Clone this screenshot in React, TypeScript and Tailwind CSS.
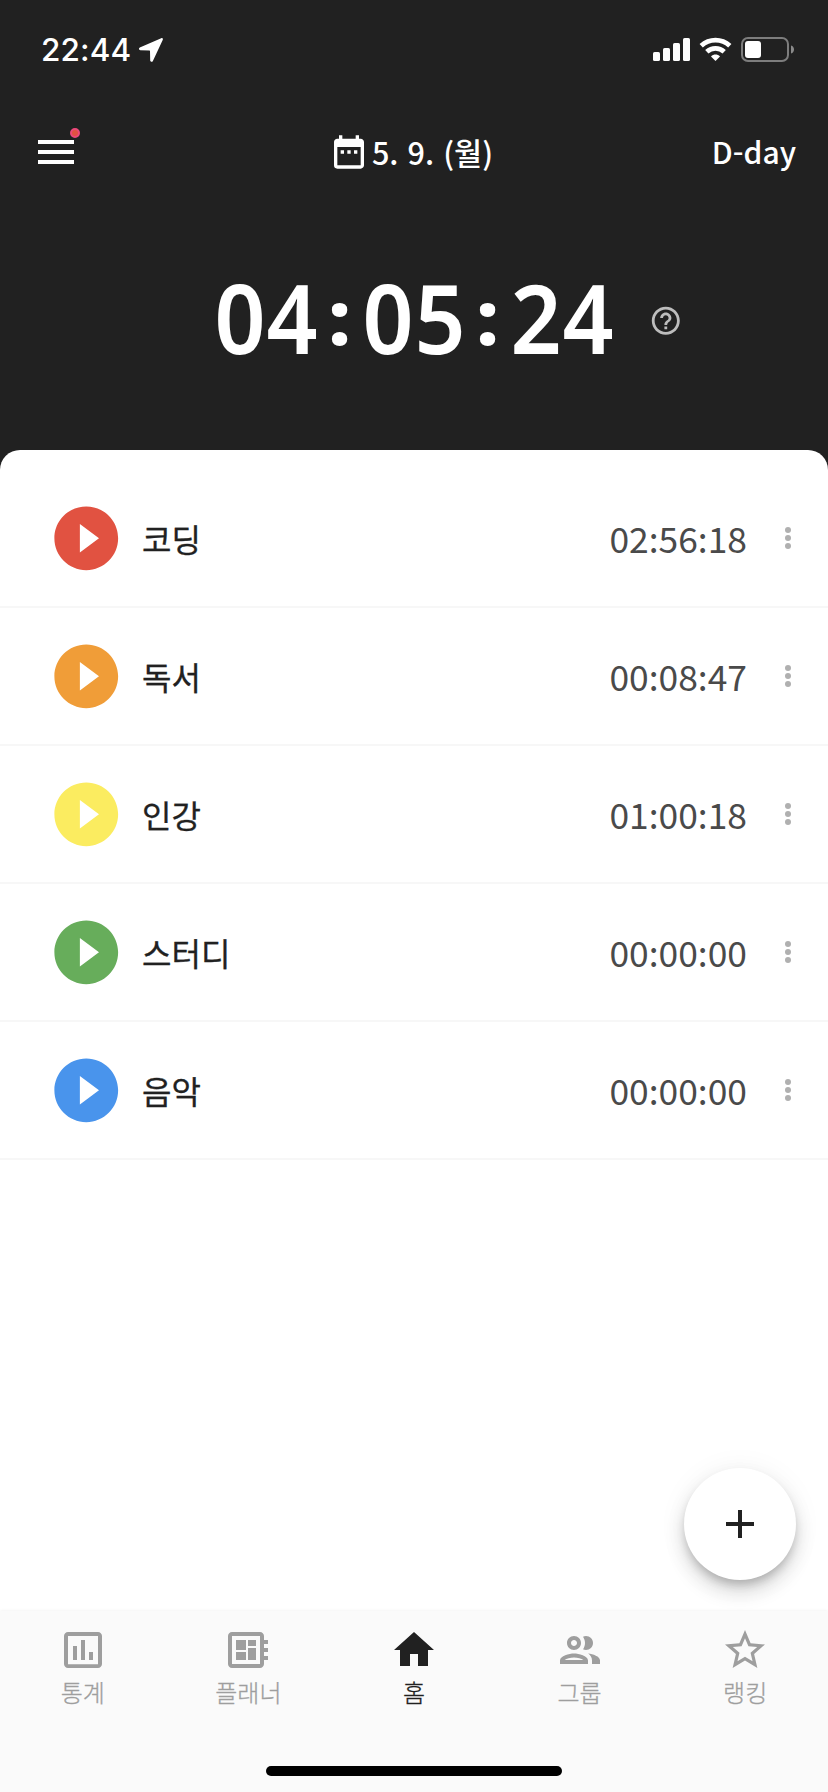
import React from 'react';
import {
  MdAdd,
  MdDateRange,
  MdHelpOutline,
  MdHome,
  MdMenu,
  MdOutlineDeveloperBoard,
  MdOutlineGroup,
  MdPlayCircleFilled,
  MdStarBorder,
} from 'react-icons/md';

interface Subject {
  id: number;
  name: string;
  time: string;
  color: string;
}

interface Tab {
  label: string;
  icon: React.ComponentType<{ className?: string }>;
  active?: boolean;
}

const ChartIcon: React.FC<{ className?: string }> = ({ className }) => (
  <svg className={className} viewBox="0 0 24 24" fill="currentColor">
    <path d="M9 17H7v-7h2v7zm4 0h-2V7h2v10zm4 0h-2v-4h2v4zm2.5 2.1h-15V5h15v14.1zm0-16.1h-15c-1.1 0-2 .9-2 2v14c0 1.1.9 2 2 2h15c1.1 0 2-.9 2-2V5c0-1.1-.9-2-2-2z" />
  </svg>
);

const subjects: Subject[] = [
  { id: 1, name: '코딩', time: '02:56:18', color: 'text-[#e15241]' },
  { id: 2, name: '독서', time: '00:08:47', color: 'text-[#f09d38]' },
  { id: 3, name: '인강', time: '01:00:18', color: 'text-[#fbec60]' },
  { id: 4, name: '스터디', time: '00:00:00', color: 'text-[#67ad5b]' },
  { id: 5, name: '음악', time: '00:00:00', color: 'text-[#4994ec]' },
];

const tabs: Tab[] = [
  { label: '통계', icon: ChartIcon },
  { label: '플래너', icon: MdOutlineDeveloperBoard },
  { label: '홈', icon: MdHome, active: true },
  { label: '그룹', icon: MdOutlineGroup },
  { label: '랭킹', icon: MdStarBorder },
];

const StatusBar: React.FC = () => (
  <div className="flex h-[100px] items-center justify-between pl-[41px] pr-[33px]">
    <div className="flex items-center">
      <span className="w-[97px] font-['Inter',sans-serif] text-[31.5px] font-[550] leading-none tracking-[0.1px]">22:44</span>
      <svg width="26" height="26" viewBox="0 0 26 26" fill="currentColor">
        <path d="M23.2 1.2 1.8 10.6C.4 11.3.8 13.2 2.3 13.2L11.4 13.4C11.8 13.4 12 13.6 12 14L12.2 23.3C12.2 25 14.2 25.3 14.9 23.9L24.7 3C25.4 1.6 24.4.6 23.2 1.2Z" />
      </svg>
    </div>
    <svg width="142" height="26" viewBox="0 0 142 26" fill="currentColor">
      <rect x="0" y="15" width="7" height="9" rx="1.6" />
      <rect x="10" y="11" width="7" height="13" rx="1.6" />
      <rect x="20" y="6" width="7" height="18" rx="1.6" />
      <rect x="30" y="1" width="7" height="23" rx="1.6" />
      <path d="M62.5 24 58 19.4C60.5 17 64.5 17 67 19.4Z" />
      <path d="M53.8 14.8C58.8 10.2 66.2 10.2 71.2 14.8" fill="none" stroke="currentColor" strokeWidth="4.8" />
      <path d="M48.2 8.8C56.4 1.2 68.6 1.2 76.8 8.8" fill="none" stroke="currentColor" strokeWidth="4.8" />
      <rect x="89" y="1" width="46" height="23" rx="6" fill="none" stroke="#7d7d7d" strokeWidth="2" />
      <rect x="92" y="4" width="16" height="17" rx="3" />
      <path d="M138 8.5C142 9.5 142 15.5 138 16.5Z" fill="#8a8a8a" />
    </svg>
  </div>
);

const Clock: React.FC<{ value: string }> = ({ value }) => (
  <div className="mb-1.5 flex items-baseline font-['Noto_Sans',sans-serif] text-[95px] font-semibold leading-none">
    {value.split('').map((char, i) =>
      char === ':' ? (
        <span key={i} className="flex w-11 -translate-y-[9px] justify-center text-[75px] font-black leading-none">
          {char}
        </span>
      ) : (
        <span key={i} className="flex w-[52px] scale-x-[0.94] justify-center">
          {char}
        </span>
      )
    )}
  </div>
);

const SubjectRow: React.FC<{ subject: Subject }> = ({ subject }) => (
  <li className="flex h-[138px] items-center border-b-2 border-[#f7f7f7] pl-[47.6px] pr-[37px]">
    <MdPlayCircleFilled className={`size-[76.5px] shrink-0 ${subject.color}`} />
    <span className="ml-[18px] text-[32px] leading-none text-[#212121] [-webkit-text-stroke:0.3px]">{subject.name}</span>
    <span className="ml-auto text-[35.4px] leading-none text-[#4a4a4a]">{subject.time}</span>
    <div className="ml-[38px] flex flex-col gap-0.5">
      <span className="size-1.5 rounded-full bg-[#b0b0b0]" />
      <span className="size-1.5 rounded-full bg-[#b0b0b0]" />
      <span className="size-1.5 rounded-full bg-[#b0b0b0]" />
    </div>
  </li>
);

const App: React.FC = () => {
  return (
    <div className="flex h-[1792px] w-[828px] flex-col overflow-hidden bg-[#212121] font-['Noto_Sans_CJK_KR',sans-serif]">
      <header className="h-[450px] shrink-0 text-white">
        <StatusBar />

        <div className="grid h-[104px] grid-cols-[1fr_auto_1fr] items-center px-8">
          <div className="relative size-12">
            <MdMenu className="size-12" />
            <span className="absolute left-[38px] top-0 size-2.5 rounded-full border-2 border-[#ec4879] bg-[#e15241]" />
          </div>
          <div className="mr-[6px] flex items-center">
            <MdDateRange className="size-10" />
            <span className="ml-[3px] text-[30.6px] font-medium leading-none [word-spacing:2.2px]">5. 9. (월)</span>
          </div>
          <span className="mb-0.5 justify-self-end text-[30px] font-medium leading-none">
            D<span className="inline-block -translate-y-[2px]">-</span>day
          </span>
        </div>

        <div className="flex h-[232px] items-center pl-[213.5px]">
          <Clock value="04:05:24" />
          <MdHelpOutline className="ml-[35.5px] mt-0.5 size-[33.6px] text-[#bdbdbd]" />
        </div>
      </header>

      <main className="relative flex-1 rounded-t-[20px] bg-white pt-5">
        <ul>
          {subjects.map((subject) => (
            <SubjectRow key={subject.id} subject={subject} />
          ))}
        </ul>
        <button className="absolute bottom-[31px] right-8 flex size-28 items-center justify-center rounded-full bg-white text-[#212121] shadow-[0_6px_10px_-2px_rgba(0,0,0,0.2),0_12px_20px_0_rgba(0,0,0,0.14),0_2px_30px_0_rgba(0,0,0,0.06)]">
          <MdAdd className="size-12" />
        </button>
      </main>

      <nav className="relative flex h-[181px] shrink-0 flex-col items-center bg-[#fafafa] shadow-[0_0_3px_rgba(0,0,0,0.08)]">
        <div className="grid w-full grid-cols-5 pt-[15px]">
          {tabs.map(({ label, icon: Icon, active }) => (
            <div key={label} className={`flex flex-col items-center ${active ? 'text-[#212121]' : 'text-[#9e9e9e]'}`}>
              <Icon className="size-12" />
              <span className="mt-[6px] text-2xl font-light leading-none [-webkit-text-stroke:0.3px]">{label}</span>
            </div>
          ))}
        </div>
        <div className="mb-4 mt-auto h-2.5 w-[296px] rounded-full bg-black" />
      </nav>
    </div>
  );
};

export default App;
